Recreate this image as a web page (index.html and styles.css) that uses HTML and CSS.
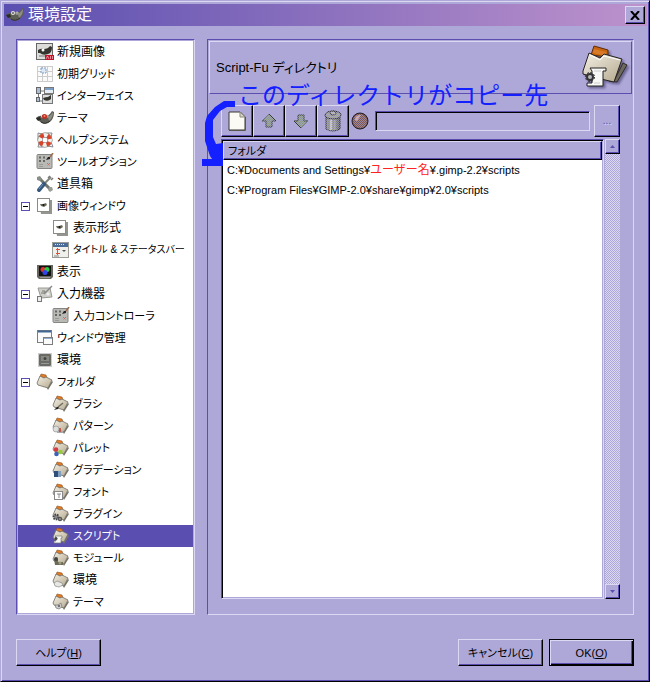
FILE: index.html
```html
<!DOCTYPE html>
<html lang="ja">
<head>
    <meta charset="UTF-8">
    <meta name="viewport" content="width=device-width, initial-scale=1.0">
    <title>環境設定</title>
    <link rel="stylesheet" href="styles.css">
</head>
<body>

<!-- Shared icon shapes -->
<svg class="sprite" width="0" height="0" aria-hidden="true">
    <defs>
        <linearGradient id="paper" x1="0" y1="0" x2="1" y2="1">
            <stop offset="0" stop-color="#f4f0e6"/>
            <stop offset="1" stop-color="#b5a98e"/>
        </linearGradient>
        <linearGradient id="metal" x1="0" x2="1">
            <stop offset="0" stop-color="#77796f"/>
            <stop offset=".35" stop-color="#d5d7cc"/>
            <stop offset="1" stop-color="#55574f"/>
        </linearGradient>
        <pattern id="dither" width="2" height="2" patternUnits="userSpaceOnUse">
            <rect width="1" height="1" fill="#aea8d9" opacity=".6"/>
            <rect x="1" y="1" width="1" height="1" fill="#aea8d9" opacity=".6"/>
        </pattern>
    </defs>
    <symbol id="wilber" viewBox="0 0 18 18">
        <path d="M0 9Q3 6 6 7L11 7Q14 6 16 2L18 3Q18 9 15 12Q11 16 6 14Q3 13 3 11L1 11Z" fill="#5d5e55"/>
        <path d="M0 9 4 8 5 11 2 12Z" fill="#2a2a26"/>
        <path d="M12 8Q15 6 17 3Q17 9 13 12Z" fill="#8e8f84"/>
        <path d="M5 13Q9 16 14 12" stroke="#2e2f2a" fill="none"/>
        <circle cx="7" cy="7" r="2" fill="#e8e8e0"/>
        <circle cx="11" cy="7" r="1.500" fill="#d6d6ce"/>
        <circle cx="7" cy="7" r=".8"/>
        <circle cx="11" cy="7" r=".6"/>
    </symbol>
    <symbol id="new-image" viewBox="0 0 18 18">
        <rect x=".5" y=".5" width="16" height="16" fill="#dcdcd8" stroke="#666"/>
        <path d="M2 7Q5 5 8 6Q12 6 14 3L16 4Q16 10 12 11Q7 13 4 10L2 10Z" fill="#34352f"/>
        <path d="M3 13H9" stroke="#aaa" stroke-width="2"/>
        <circle cx="7" cy="7" r="1.500" fill="#fff"/>
        <rect x="9" y="12" width="9" height="5" fill="#c3122a"/>
        <path d="M10 16 11.500 13 13 16M14.500 13V16M16.500 13V16" stroke="#f5aab0" fill="none" stroke-width=".8"/>
    </symbol>
    <symbol id="grid" viewBox="0 0 18 18">
        <rect x="1" y="1" width="16" height="16" fill="#fafafa"/>
        <path d="M1.500 1V17M6.500 1V17M11.500 1V17M16.500 1V17M1 1.500H17M1 6.500H17M1 11.500H17M1 16.500H17" stroke="#ccc"/>
        <path d="M5 3V8H10V3Z" fill="#dce8f6" stroke="#7c9cc4" stroke-dasharray="2 1"/>
    </symbol>
    <symbol id="interface" viewBox="0 0 18 18">
        <path d="M4 4H10M2.500 5V14H7" stroke="#777" fill="none"/>
        <rect x=".5" y=".5" width="4" height="6" fill="#a9bfd8" stroke="#666"/>
        <rect x="8.500" y=".5" width="9" height="6" fill="#e7edf5" stroke="#777"/>
        <path d="M9 2H17" stroke="#7c9fc8" stroke-width="2"/>
        <rect x="6.500" y="7.500" width="10" height="9" fill="#ddd" stroke="#777"/>
        <path d="M7 11Q10 10 12 10L15 8V12Q12 15 8 13Z" fill="#35362f"/>
        <rect x=".5" y="10.500" width="3" height="4" fill="#a9bfd8" stroke="#666"/>
    </symbol>
    <symbol id="theme" viewBox="0 0 18 18">
        <use href="#wilber"/>
        <circle cx="8.500" cy="7.500" r="2.500" fill="#c32d20"/>
        <circle cx="8.500" cy="7" r="1" fill="#f38a70"/>
    </symbol>
    <symbol id="help" viewBox="0 0 18 18">
        <path d="M2 2 6 3 12 2 16 2 15 6 15 11 17 16 12 15 6 16 2 16 3 12 2 8Z" fill="none" stroke="#888"/>
        <circle cx="9" cy="9" r="5" fill="none" stroke="#666" stroke-width="5"/>
        <circle cx="9" cy="9" r="5" fill="none" stroke="#f2f0ec" stroke-width="4"/>
        <circle cx="9" cy="9" r="5" fill="none" stroke="#d84328" stroke-width="4" stroke-dasharray="4 3.854" stroke-dashoffset="-2"/>
    </symbol>
    <symbol id="tool-options" viewBox="0 0 18 18">
        <rect x="1" y="1.500" width="15" height="14" rx="1" fill="#b9b9b5" stroke="#858581"/>
        <path d="M3 4.500H5M7 4.500H9M3 8H5M7 8H9" stroke="#666" stroke-width="2"/>
        <path d="M3 11.500H7M3 13.500H7" stroke="#999"/>
        <path d="M11 10 14 13M14 10 11 13" stroke="#c95b50" stroke-dasharray="1 1"/>
        <path d="M10 7 12 4 14 4 14 6Z" fill="#222"/>
        <path d="M14 4 17 0" stroke="#9a6b4e" stroke-width="1.500"/>
    </symbol>
    <symbol id="toolbox" viewBox="0 0 18 18">
        <path d="M3 3 14 14" stroke="#71746d" stroke-width="3"/>
        <path d="M1 2 4 1 6 4 4 6 1 5Z" fill="#8b8e87"/>
        <path d="M13 12 16 12 17 15 14 17 12 15Z" fill="#9b9e97"/>
        <path d="M15 2 8 9" stroke="#81847d" stroke-width="2"/>
        <path d="M12 3 14 1M15 5 17 3" stroke="#777" stroke-width="1.500"/>
        <path d="M8 9 3 15" stroke="#35567c" stroke-width="4" stroke-linecap="round"/>
        <path d="M7 9 3 14" stroke="#7297be"/>
    </symbol>
    <symbol id="image-window" viewBox="0 0 18 18">
        <path d="M3 3H16V17H5Z" fill="#95958f"/>
        <rect x="1.500" y="1.500" width="12" height="13" fill="#fff" stroke="#8c8c86"/>
        <path d="M4 7 7 7 10 6 11 8 8 10 5 9Z" fill="#6d6a5c"/>
        <circle cx="7.500" cy="8" r="1" fill="#15150f"/>
    </symbol>
    <symbol id="statusbar" viewBox="0 0 18 18">
        <rect x=".5" y="1.500" width="16" height="15" fill="#efefec" stroke="#9b9b96"/>
        <rect x="1" y="2" width="15" height="4" fill="#4a6c96"/>
        <path d="M3 3.500H13" stroke="#dbe7f4" stroke-dasharray="1 1"/>
        <path d="M5.500 7V14M4 8.500H8M4 12.500H8" stroke="#df5138"/>
        <path d="M10 9 14 9 12 11Z" fill="#555"/>
        <path d="M2 15H7" stroke="#888"/>
    </symbol>
    <symbol id="display" viewBox="0 0 18 18">
        <path d="M1 2H17V14L15 16H3L1 14Z" fill="#66665f"/>
        <rect x="3" y="3" width="12" height="10" fill="#111"/>
        <circle cx="7" cy="6.500" r="2.500" fill="#e13232"/>
        <circle cx="11" cy="6.500" r="2.500" fill="#2cc746"/>
        <circle cx="9" cy="9.500" r="2.500" fill="#2f46e9"/>
        <path d="M4 14.500H14" stroke="#999"/>
    </symbol>
    <symbol id="input-device" viewBox="0 0 18 18">
        <path d="M2 3 14 3 16 12 5 13Z" fill="#cfcfca" stroke="#999993"/>
        <path d="M5 8H9V6H6" stroke="#7c7c77" fill="none"/>
        <path d="M8 9 16 1" stroke="#888" stroke-width="1.500"/>
        <rect x="1.500" y="11.500" width="4" height="5" fill="#eee" stroke="#777"/>
        <circle cx="12" cy="9" r="1.500" fill="#eee"/>
    </symbol>
    <symbol id="windows" viewBox="0 0 18 18">
        <rect x="1.500" y="1.500" width="14" height="12" fill="#fafafa" stroke="#7c7e7d"/>
        <path d="M2 2.500H15" stroke="#3f6694" stroke-width="2"/>
        <rect x="7.500" y="8.500" width="9" height="7" fill="#fafafa" stroke="#7c7e7d"/>
        <path d="M8 9.500H16" stroke="#90b0d3"/>
    </symbol>
    <symbol id="chip" viewBox="0 0 18 18">
        <rect x="2.500" y="2.500" width="13" height="13" fill="none" stroke="#999" stroke-dasharray="1 1"/>
        <rect x="3" y="3" width="12" height="12" rx="1" fill="#6b6b66"/>
        <rect x="5" y="5" width="8" height="5" fill="#888983"/>
        <circle cx="9" cy="7.500" r="1.500" fill="#444"/>
        <path d="M5 12.500H13" stroke="#999"/>
    </symbol>
    <symbol id="folder" viewBox="0 0 18 18">
        <path d="M11 15 16 8 17 9 12 17Z" fill="#77736a"/>
        <path d="M4 4 5 1 10 2 11 5Z" fill="#e07a25" stroke="#9b4d12" stroke-width=".6"/>
        <path d="M1 10 4 3 8 5 10 4 16 7 12 15 2 12Z" fill="url(#paper)" stroke="#6f6a60" stroke-width=".8"/>
    </symbol>

    <!-- Folder variants -->
    <symbol id="f-brush" viewBox="0 0 18 18">
        <use href="#folder"/>
        <path d="M2 15 5 12 7 12 6 14Z" fill="#222"/>
        <path d="M6 12 11 8" stroke="#716b60" stroke-width="1.500"/>
    </symbol>
    <symbol id="f-pattern" viewBox="0 0 18 18">
        <use href="#folder"/>
        <circle cx="4" cy="12" r="3" fill="#ddd" stroke="#888" stroke-width=".6"/>
        <path d="M5 15H11" stroke="#aaa" stroke-width="2"/>
        <path d="M8 11V15" stroke="#c54034" stroke-width="1.500"/>
    </symbol>
    <symbol id="f-palette" viewBox="0 0 18 18">
        <use href="#folder"/>
        <circle cx="4" cy="10.500" r="2.300" fill="#d63b45"/>
        <circle cx="8.500" cy="13" r="2.300" fill="#9acb3b"/>
        <circle cx="4.500" cy="15" r="2.300" fill="#3a62b7"/>
    </symbol>
    <symbol id="f-gradient" viewBox="0 0 18 18">
        <use href="#folder"/>
        <rect x="2" y="10" width="7" height="6" fill="#305079"/>
        <rect x="6" y="10" width="3" height="6" fill="#809ec0"/>
    </symbol>
    <symbol id="f-font" viewBox="0 0 18 18">
        <use href="#folder"/>
        <rect x="2.500" y="8.500" width="8" height="8" fill="#fff" stroke="#888"/>
        <path d="M5 11H9M7 11V15" stroke="#888"/>
    </symbol>
    <symbol id="f-plugin" viewBox="0 0 18 18">
        <use href="#folder"/>
        <circle cx="4" cy="12" r="2.500" fill="#888" stroke="#444" stroke-width="2" stroke-dasharray="1.500 1"/>
        <circle cx="8" cy="14" r="1.500" fill="#ccc" stroke="#555" stroke-width="1.500"/>
    </symbol>
    <symbol id="f-script" viewBox="0 0 18 18">
        <use href="#folder"/>
        <path d="M3 9H10V11H9V16H2V14H4V10Z" fill="#f7f7f4" stroke="#777" stroke-width=".7"/>
        <circle cx="4" cy="11.500" r="1.500" fill="#444"/>
    </symbol>
    <symbol id="f-module" viewBox="0 0 18 18">
        <use href="#folder"/>
        <path d="M2 10H6V13H11V16H3Z" fill="#6b6b57"/>
        <circle cx="4" cy="10" r="2" fill="#444"/>
        <circle cx="8" cy="14" r="1.500" fill="#9b9b80"/>
    </symbol>
    <symbol id="f-env" viewBox="0 0 18 18">
        <use href="#folder"/>
        <path d="M2 12 5 10 10 12 11 14 7 16 3 15Z" fill="#e7e7e4" stroke="#888" stroke-width=".7"/>
    </symbol>
    <symbol id="f-theme" viewBox="0 0 18 18">
        <use href="#folder"/>
        <path d="M3 12 6 12 9 10 10 14 7 16 4 15Z" fill="#ccc" stroke="#777" stroke-width=".7"/>
        <circle cx="7" cy="13" r="1" fill="#555"/>
    </symbol>
</svg>

<div class="window">
    <header class="titlebar">
        <svg class="title-icon"><use href="#wilber"/></svg>
        <h1>環境設定</h1>
        <button class="close" aria-label="閉じる">
            <svg width="10" height="9" viewBox="0 0 10 9"><path d="M1 0 9 9M9 0 1 9" stroke="#000" stroke-width="2"/></svg>
        </button>
    </header>

    <main class="content">
        <!-- Category tree -->
        <ul class="tree">
            <li><span class="slot"></span><svg><use href="#new-image"/></svg>新規画像</li>
            <li class="kana"><span class="slot"></span><svg><use href="#grid"/></svg>初期グリッド</li>
            <li class="kana"><span class="slot"></span><svg><use href="#interface"/></svg>インターフェイス</li>
            <li class="kana"><span class="slot"></span><svg><use href="#theme"/></svg>テーマ</li>
            <li class="kana"><span class="slot"></span><svg><use href="#help"/></svg>ヘルプシステム</li>
            <li class="kana"><span class="slot"></span><svg><use href="#tool-options"/></svg>ツールオプション</li>
            <li><span class="slot"></span><svg><use href="#toolbox"/></svg>道具箱</li>
            <li class="kana"><button class="slot expander" aria-label="折りたたむ"></button><svg><use href="#image-window"/></svg>画像ウィンドウ</li>
            <li class="child"><svg><use href="#image-window"/></svg>表示形式</li>
            <li class="child long"><svg><use href="#statusbar"/></svg>タイトル &amp; ステータスバー</li>
            <li><span class="slot"></span><svg><use href="#display"/></svg>表示</li>
            <li><button class="slot expander" aria-label="折りたたむ"></button><svg><use href="#input-device"/></svg>入力機器</li>
            <li class="child kana"><svg><use href="#tool-options"/></svg>入力コントローラ</li>
            <li class="kana"><span class="slot"></span><svg><use href="#windows"/></svg>ウィンドウ管理</li>
            <li><span class="slot"></span><svg><use href="#chip"/></svg>環境</li>
            <li class="kana"><button class="slot expander" aria-label="折りたたむ"></button><svg><use href="#folder"/></svg>フォルダ</li>
            <li class="child kana"><svg><use href="#f-brush"/></svg>ブラシ</li>
            <li class="child kana"><svg><use href="#f-pattern"/></svg>パターン</li>
            <li class="child kana"><svg><use href="#f-palette"/></svg>パレット</li>
            <li class="child kana"><svg><use href="#f-gradient"/></svg>グラデーション</li>
            <li class="child kana"><svg><use href="#f-font"/></svg>フォント</li>
            <li class="child kana"><svg><use href="#f-plugin"/></svg>プラグイン</li>
            <li class="child kana selected"><svg><use href="#f-script"/></svg>スクリプト</li>
            <li class="child kana"><svg><use href="#f-module"/></svg>モジュール</li>
            <li class="child"><svg><use href="#f-env"/></svg>環境</li>
            <li class="child kana"><svg><use href="#f-theme"/></svg>テーマ</li>
        </ul>

        <!-- Script-Fu page -->
        <section class="panel">
            <div class="panel-head">
                <h2>Script-Fu ディレクトリ</h2>
                <svg class="panel-icon" viewBox="0 0 48 48">
                    <path d="M33 37 42 19 46 21 36 38 28 37Z" fill="#6d695f" stroke="#2e2b27"/>
                    <path d="M10 11 13 2 27 6 27 13Z" fill="#c9650f" stroke="#5d2d08"/>
                    <path d="M13 5 25 8 25 12 12 9Z" fill="#d97a28"/>
                    <path d="M2 27 8 9 19 14 23 10 41 15 33 38 20 35 2 30Z" fill="url(#paper)" stroke="#24221f" stroke-linejoin="round"/>
                    <path d="M9 11 19 16 23 12 39 16" fill="none" stroke="#fff"/>
                    <path d="M9 24H25V27H22V42H6V39H11V27Z" fill="#f7f7f6" stroke="#222" stroke-linejoin="round"/>
                    <path d="M13 27H20M13 39H19" stroke="#ccc"/>
                    <circle cx="9" cy="33" r="3" fill="#bbb" stroke="#333" stroke-width="2"/>
                    <circle cx="9" cy="33" r="4.500" fill="none" stroke="#333" stroke-dasharray="2 1.500"/>
                </svg>
            </div>

            <div class="editor">
                <div class="toolbar">
                    <button class="tool" aria-label="新規">
                        <svg viewBox="0 0 24 24">
                            <path d="M4 3H16L21 8V22H4Z" fill="#77746d"/>
                            <path d="M4 3H15L20 8V21H4Z" fill="#fbfaf5" stroke="#38372f"/>
                            <path d="M15 3V8H20Z" fill="#d9d6ca" stroke="#8a877c"/>
                        </svg>
                    </button>
                    <button class="tool" aria-label="上へ" disabled>
                        <svg viewBox="0 0 24 24">
                            <path d="M12 5 19 12H15V18H9V12H5Z" fill="#8b9a83" stroke="#333b30"/>
                            <path d="M12 4 20 13H16V19H8V13H4Z" fill="url(#dither)"/>
                        </svg>
                    </button>
                    <button class="tool" aria-label="下へ" disabled>
                        <svg viewBox="0 0 24 24">
                            <path d="M12 19 5 12H9V6H15V12H19Z" fill="#8b9a83" stroke="#333b30"/>
                            <path d="M12 20 4 12H8V5H16V12H20Z" fill="url(#dither)"/>
                        </svg>
                    </button>
                    <button class="tool" aria-label="削除" disabled>
                        <svg viewBox="0 0 24 24">
                            <path d="M5 8V20Q12 24 19 20V8Z" fill="url(#metal)" stroke="#333"/>
                            <path d="M8 10V20M12 11V21M16 10V20" stroke="#6e706a"/>
                            <ellipse cx="12" cy="6" rx="8" ry="4" fill="#a0a298" stroke="#222"/>
                            <ellipse cx="12" cy="4" rx="3" ry="2" fill="#b8bab0" stroke="#333"/>
                            <rect x="2" y="1" width="20" height="22" fill="url(#dither)"/>
                        </svg>
                    </button>
                    <svg class="led" viewBox="0 0 18 18">
                        <circle cx="9" cy="9" r="8" fill="#7d574f" stroke="#221d28"/>
                        <path d="M4 8Q4 3 10 3L6 9Z" fill="#d6aaa6"/>
                        <circle cx="9" cy="9" r="7" fill="url(#dither)"/>
                    </svg>
                    <input class="path" type="text" aria-label="フォルダのパス" disabled>
                    <button class="browse" disabled>...</button>
                </div>

                <div class="list-area">
                    <div class="list">
                        <table>
                            <thead>
                                <tr><th>フォルダ</th></tr>
                            </thead>
                            <tbody>
                                <tr><td>C:¥Documents and Settings¥<span class="user">ユーザー名</span>¥.gimp-2.2¥scripts</td></tr>
                                <tr><td>C:¥Program Files¥GIMP-2.0¥share¥gimp¥2.0¥scripts</td></tr>
                            </tbody>
                        </table>
                    </div>
                    <div class="scrollbar">
                        <button aria-label="上へスクロール"><svg viewBox="0 0 5 3"><path d="M0 3 2.500 0 5 3Z"/></svg></button>
                        <button aria-label="下へスクロール"><svg viewBox="0 0 5 3"><path d="M0 0H5L2.500 3Z"/></svg></button>
                    </div>
                </div>

                <!-- Handwritten note over the toolbar -->
                <p class="note">このディレクトリがコピー先</p>
                <svg class="note-arrow" viewBox="0 0 36 72">
                    <path d="M34 4H23L14 10 6 19 4 26V44L9 59 16 69H22V46L15 47 12 40V23L19 14 26 10H34Z" fill="#1420ff"/>
                    <path d="M1 65.500H20" stroke="#1420ff" stroke-width="7"/>
                </svg>
            </div>
        </section>
    </main>

    <footer class="buttons">
        <button class="push">ヘルプ(<u>H</u>)</button>
        <span class="spacer"></span>
        <button class="push">キャンセル(<u>C</u>)</button>
        <button class="push default">OK(<u>O</u>)</button>
    </footer>
</div>

</body>
</html>
```
FILE: styles.css
```css
* {
    box-sizing: border-box;
}

body {
    margin: 0;
    background-color: #aea8d9;
    color: #000;
    font-family: "Liberation Sans", "Noto Sans CJK JP", sans-serif;
    font-size: 12px;
    line-height: 16px;
    font-feature-settings: "palt";
}

button {
    margin: 0;
    padding: 0;
    font: inherit;
    font-feature-settings: inherit;
    color: #000;
    background-color: #aea8d9;
    border: 1px solid;
    border-color: #dcd8f4 #000 #000 #dcd8f4;
    box-shadow: inset -1px -1px #5a4fb0;
    display: flex;
    align-items: center;
    justify-content: center;
}

.sprite {
    position: absolute;
}

.window {
    min-height: 100vh;
    display: flex;
    flex-direction: column;
    padding: 3px 2px 0 3px;
    border: 1px solid;
    border-color: #aea8d9 #000 #000 #aea8d9;
    box-shadow: inset 1px 1px #dcd8f4, inset -1px -1px #5a4fb0;
}

/* Title bar */
.titlebar {
    display: flex;
    align-items: center;
    gap: 4px;
    height: 22px;
    padding: 0 2px;
    background: linear-gradient(to right, #5a4fb0, #bd92cc);
}

.titlebar h1 {
    flex: 1;
    margin: 0;
    font-size: 16px;
    font-weight: normal;
    line-height: 22px;
    color: #fff;
}

.title-icon {
    width: 18px;
    height: 18px;
}

.close {
    width: 20px;
    height: 18px;
}

/* Main area */
.content {
    flex: 1;
    display: flex;
    gap: 12px;
    padding: 13px 13px 0 12px;
}

.tree {
    width: 179px;
    margin: 0;
    padding: 1px;
    list-style: none;
    background-color: #fff;
    border: 1px solid;
    border-color: #5a4fb0 #dcd8f4 #dcd8f4 #5a4fb0;
    box-shadow: inset 0 0 0 1px #aea8d9;
}

.tree li {
    display: flex;
    align-items: center;
    height: 22px;
    padding-left: 3px;
    white-space: nowrap;
}

.tree li.child {
    padding-left: 34px;
}

.tree li.kana {
    font-size: 11px;
}

.tree li.long {
    font-size: 10px;
}

.tree li.selected {
    background-color: #5a4fb0;
    color: #fff;
}

.tree svg {
    flex: none;
    width: 18px;
    height: 18px;
    margin-right: 3px;
}

.slot {
    flex: none;
    width: 9px;
    height: 9px;
    margin-right: 6px;
}

.expander {
    background-color: #fff;
    border: 1px solid #5a4fb0;
    box-shadow: none;
}

.expander::before {
    content: "";
    width: 5px;
    height: 1px;
    background-color: #000;
}

.panel {
    flex: 1;
    min-width: 0;
    display: flex;
    flex-direction: column;
    padding: 1px;
    border: 1px solid;
    border-color: #5a4fb0 #dcd8f4 #dcd8f4 #5a4fb0;
}

.panel-head {
    display: flex;
    align-items: center;
    justify-content: space-between;
    height: 53px;
    padding: 0 2px 0 6px;
    border: 1px solid;
    border-color: #dcd8f4 #5a4fb0 #5a4fb0 #dcd8f4;
}

.panel-head h2 {
    margin: 0;
    font-size: 13px;
    font-weight: normal;
}

.panel-icon {
    width: 48px;
    height: 48px;
    filter: drop-shadow(2px 2px 1px #6c6694);
}

.editor {
    position: relative;
    flex: 1;
    display: flex;
    flex-direction: column;
    gap: 2px;
    padding: 11px 12px 14px;
}

/* Path toolbar */
.toolbar {
    display: flex;
    align-items: center;
    height: 32px;
}

.tool {
    width: 32px;
    height: 32px;
}

.tool svg {
    width: 24px;
    height: 24px;
}

.led {
    width: 18px;
    height: 18px;
    margin: 0 6px 0 2px;
}

.path {
    flex: 1;
    min-width: 0;
    height: 20px;
    margin-right: 4px;
    padding: 0 4px;
    background-color: #aea8d9;
    border: 1px solid;
    border-color: #5a4fb0 #dcd8f4 #dcd8f4 #5a4fb0;
    box-shadow: inset 1px 1px #000;
    font: inherit;
}

.browse {
    width: 26px;
    height: 32px;
    font-size: 10px;
    color: #5a4fb0;
    text-shadow: 1px 1px #dcd8f4;
}

/* Folder list */
.list-area {
    flex: 1;
    display: flex;
    gap: 1px;
}

.list {
    flex: 1;
    padding: 1px;
    background-color: #fff;
    border: 1px solid;
    border-color: #5a4fb0 #dcd8f4 #dcd8f4 #5a4fb0;
    box-shadow: inset 1px 1px #000, inset -1px -1px #aea8d9;
}

.list table {
    width: 100%;
    border-collapse: separate;
    border-spacing: 0;
    font-size: 11px;
}

.list th {
    height: 19px;
    padding: 0 4px;
    font-weight: normal;
    text-align: left;
    background-color: #aea8d9;
    border: 1px solid;
    border-color: #dcd8f4 #000 #000 #dcd8f4;
    box-shadow: inset -1px -1px #5a4fb0;
}

.list td {
    height: 20px;
    padding: 0 4px;
    white-space: nowrap;
}

.user {
    color: #f22;
    font-size: 12px;
    line-height: 12px;
    font-feature-settings: normal;
}

.scrollbar {
    width: 15px;
    display: flex;
    flex-direction: column;
    justify-content: space-between;
    background: repeating-conic-gradient(#dcd8f4 0% 25%, #aea8d9 0% 50%) 0 0 / 2px 2px;
}

.scrollbar button {
    width: 15px;
    height: 15px;
}

.scrollbar svg {
    width: 5px;
    height: 3px;
    fill: #5a4fb0;
}

/* Note */
.note {
    position: absolute;
    top: -12px;
    left: 29px;
    margin: 0;
    color: #1420ff;
    font-family: "Noto Sans CJK JP", sans-serif;
    font-size: 24px;
    line-height: 24px;
    font-feature-settings: normal;
    white-space: nowrap;
}

.note-arrow {
    position: absolute;
    top: 3px;
    left: -8px;
    width: 36px;
    height: 72px;
}

/* Bottom buttons */
.buttons {
    display: flex;
    gap: 6px;
    padding: 24px 13px 15px 12px;
}

.spacer {
    flex: 1;
}

.push {
    width: 85px;
    height: 27px;
    font-size: 11px;
}

.push.default {
    border-color: #000;
    box-shadow: inset 1px 1px #dcd8f4, inset -1px -1px #000, inset -2px -2px #5a4fb0;
}
```
